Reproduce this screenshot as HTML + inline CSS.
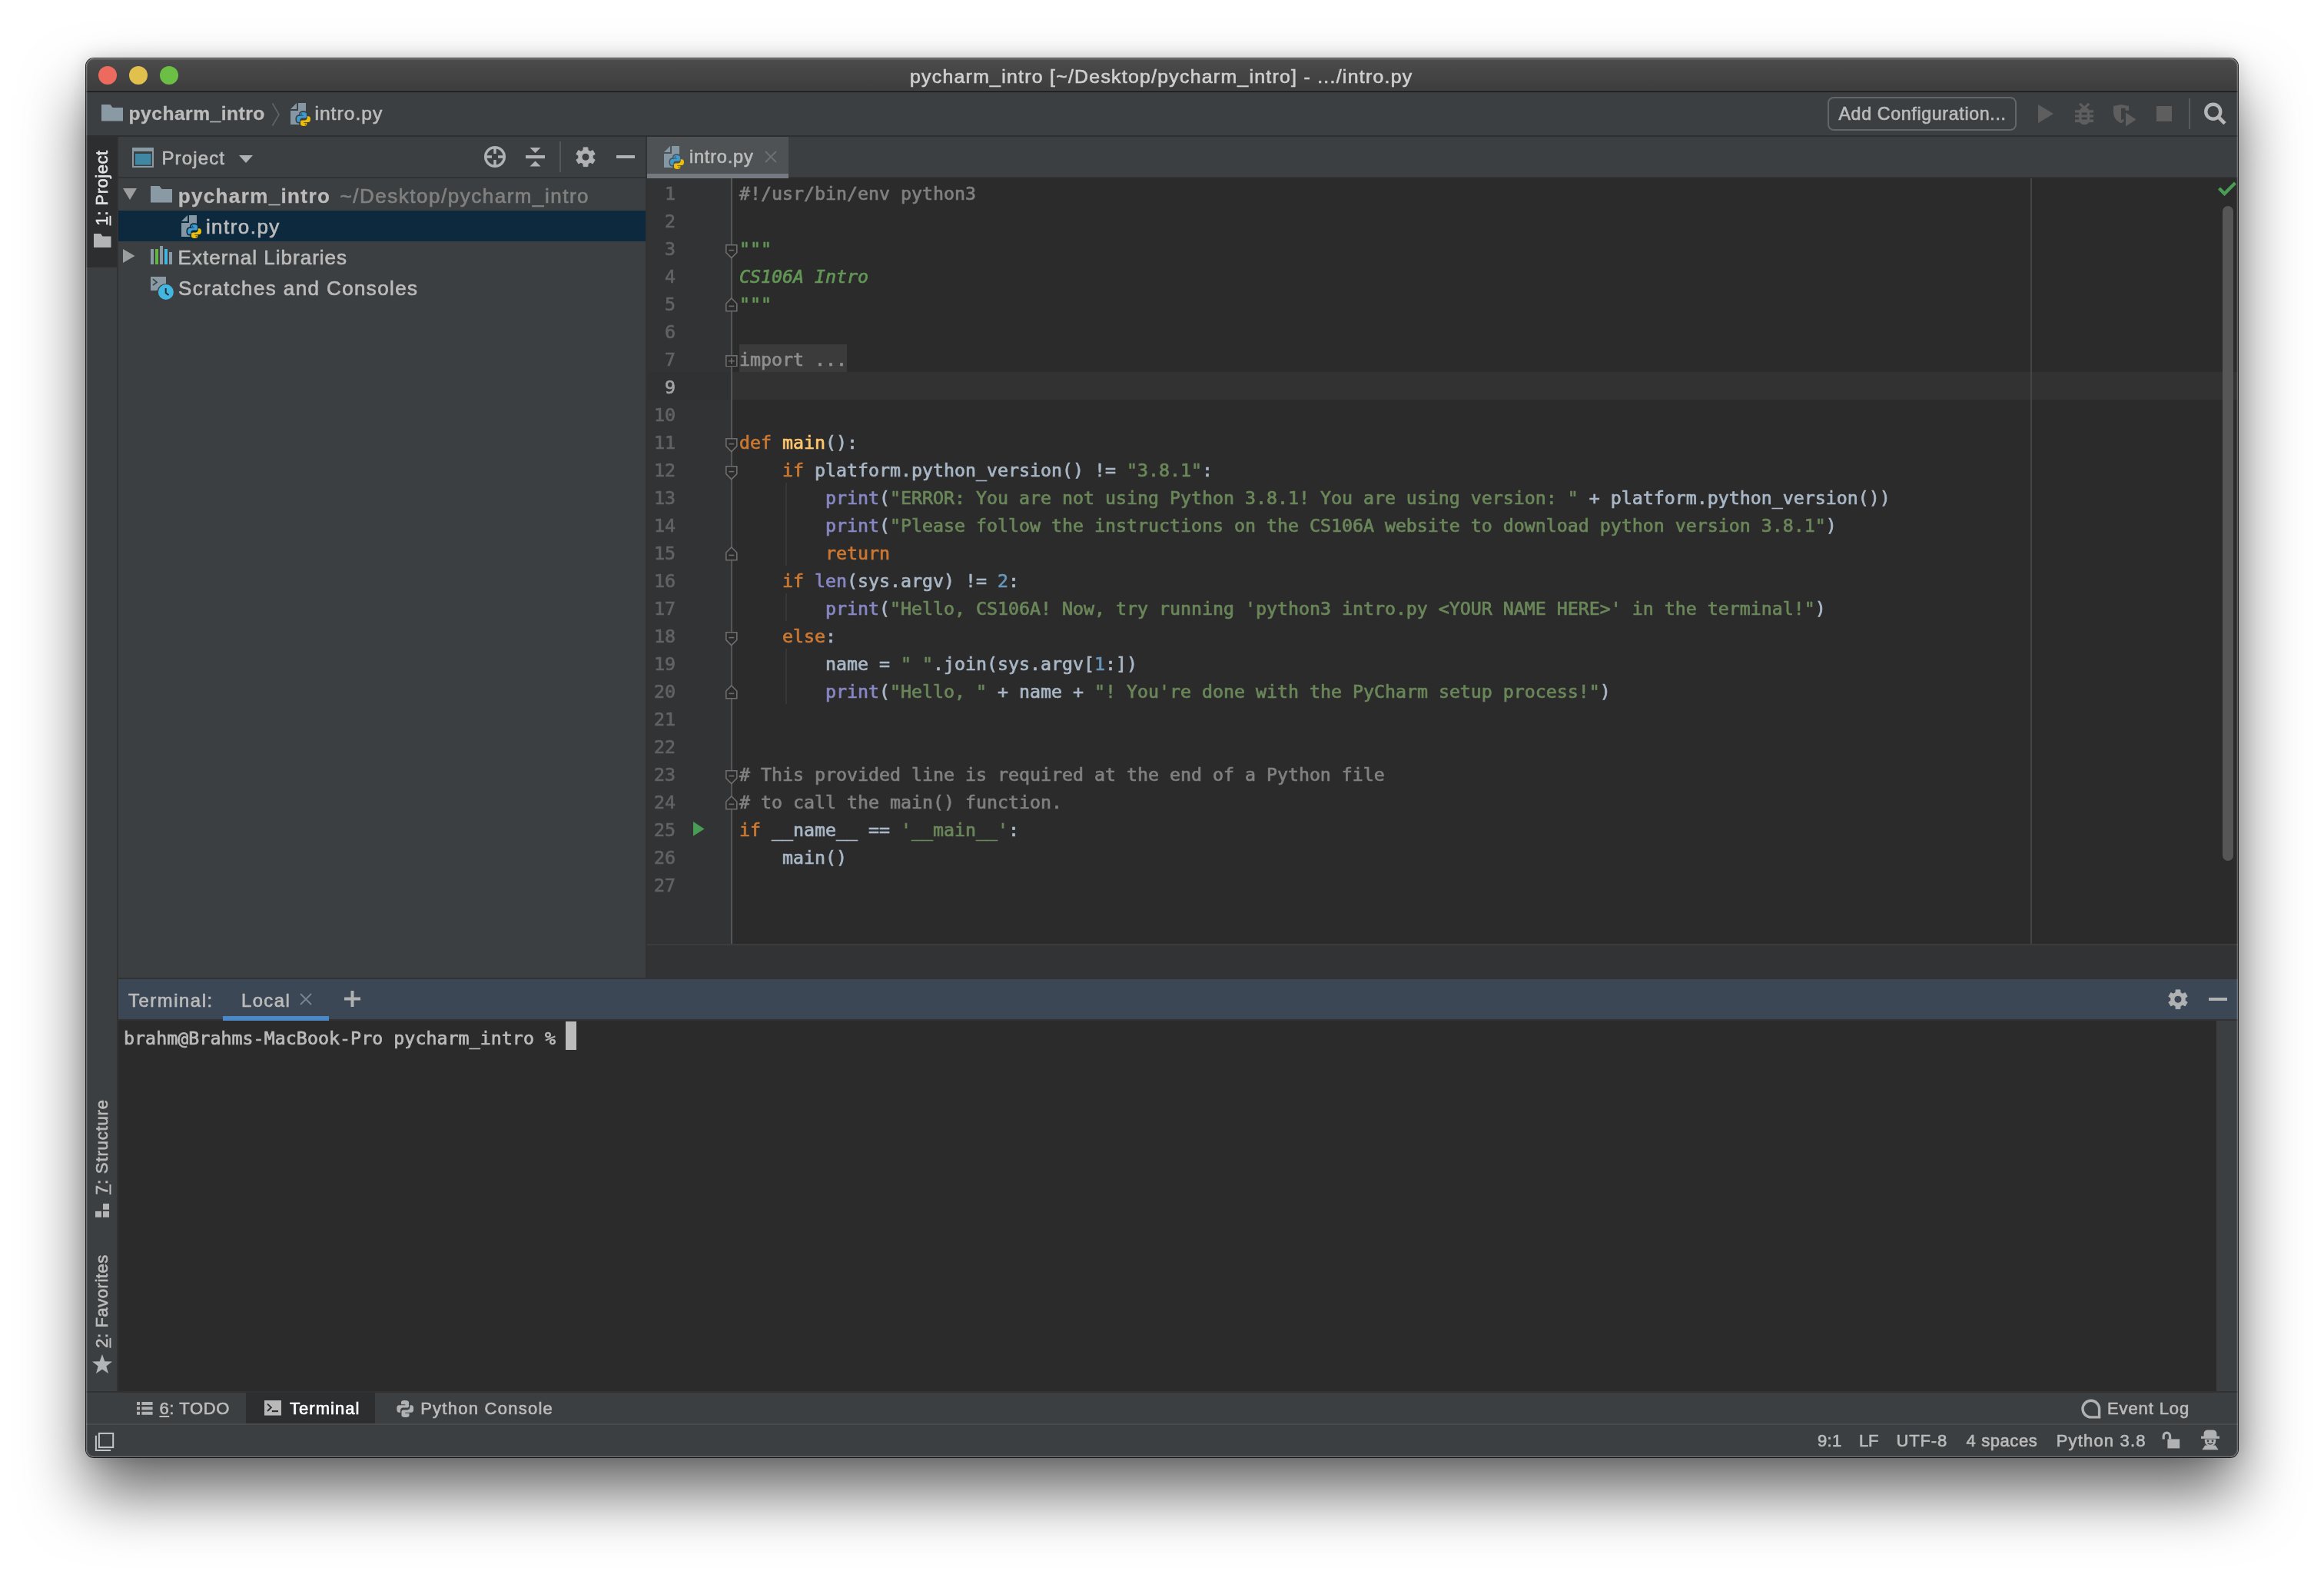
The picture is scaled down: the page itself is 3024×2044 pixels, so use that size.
<!DOCTYPE html>
<html><head><meta charset="utf-8"><title>pycharm_intro</title>
<style>
html,body{margin:0;padding:0;background:#fff;}
body{width:3024px;height:2044px;position:relative;overflow:hidden;font-family:'Liberation Sans', sans-serif;}
#shadow{position:absolute;left:112px;top:76px;width:2800px;height:1820px;border-radius:10px;box-shadow:0 46px 82px rgba(0,0,0,0.60), 0 0 24px rgba(0,0,0,0.16), 0 0 0 1px rgba(0,0,0,0.85);}
#win{position:absolute;left:0;top:0;width:3024px;height:2044px;clip-path:inset(76px 112px 148px 112px round 10px);background:#3c3f41;will-change:transform;}
#ring{position:absolute;left:112px;top:76px;width:2800px;height:1820px;box-sizing:border-box;border:1px solid rgba(255,255,255,0.27);border-radius:10px;box-shadow:inset 0 0 0 1px rgba(255,255,255,0.09);}
#win div,#win svg,#win span.t{position:absolute;}
span.t{white-space:pre;-webkit-text-stroke:0.65px currentColor;}

.code,.ln{-webkit-text-stroke:0.7px currentColor}
.code{font-family:"DejaVu Sans Mono","Liberation Mono",monospace;font-size:23.25px;letter-spacing:0px;white-space:pre;color:#a9b7c6;height:36px;line-height:36px;}
.k{color:#cc7832}.s{color:#6a8759}.d{color:#629755;font-style:italic}.c{color:#808080}.n{color:#6897bb}.f{color:#ffc66d}.b{color:#8888c6}
.ln{font-family:"DejaVu Sans Mono","Liberation Mono",monospace;font-size:23.25px;color:#606366;height:36px;line-height:36px;text-align:right;width:60px;white-space:pre;}

</style></head><body>
<div id="shadow"></div>
<div id="win">
<div style="left:112px;top:76px;width:2800px;height:44px;background:linear-gradient(#4c4c4c,#3c3c3c);"></div>
<div style="left:112px;top:76px;width:2800px;height:1px;background:#6b6b6b;"></div>
<div style="left:112px;top:118.6px;width:2800px;height:1.5px;background:#0c0c0c;"></div>
<div style="left:128px;top:86px;width:24px;height:24px;background:#ed6a5e;border-radius:50%;"></div>
<div style="left:168px;top:86px;width:24px;height:24px;background:#e2c04d;border-radius:50%;"></div>
<div style="left:208px;top:86px;width:24px;height:24px;background:#6cbf45;border-radius:50%;"></div>
<div style="left:112px;top:120px;width:2800px;height:56px;background:#3c3f41;"></div>
<div style="left:112px;top:176px;width:2800px;height:2px;background:#2d2f30;"></div>
<div style="left:2377.6px;top:125.6px;width:246.6px;height:44.6px;background:transparent;border:2.2px solid #636567;border-radius:8px;box-sizing:border-box;"></div>
<div style="left:2805.9px;top:138px;width:20.2px;height:20px;background:#5e5e5e;"></div>
<div style="left:2848px;top:128px;width:2px;height:40px;background:#5a5a5a;"></div>
<div style="left:112px;top:178px;width:40px;height:1632px;background:#3c3f41;"></div>
<div style="left:152px;top:178px;width:2px;height:1632px;background:#323232;"></div>
<div style="left:112px;top:178px;width:40px;height:170px;background:#2c2e2f;"></div>
<div style="left:154px;top:178px;width:686px;height:1094px;background:#3c3f41;"></div>
<div style="left:154px;top:230px;width:686px;height:2px;background:#323232;"></div>
<div style="left:840px;top:178px;width:2px;height:1094px;background:#323232;"></div>
<div style="left:727.8px;top:184px;width:2px;height:40px;background:#55585a;"></div>
<div style="left:802px;top:202px;width:24.3px;height:4.2px;background:#afb1b3;"></div>
<div style="left:154px;top:274px;width:686px;height:40px;background:#0d293e;"></div>
<div style="left:842px;top:178px;width:2070px;height:54px;background:#3c3f41;"></div>
<div style="left:842px;top:230px;width:2070px;height:2px;background:#323232;"></div>
<div style="left:842px;top:178px;width:184px;height:54px;background:#4e5254;"></div>
<div style="left:842px;top:226px;width:184px;height:6px;background:#747a80;"></div>
<div style="left:842px;top:232px;width:110px;height:996px;background:#313335;"></div>
<div style="left:953px;top:232px;width:1959px;height:996px;background:#2b2b2b;"></div>
<div style="left:951px;top:232px;width:2px;height:996px;background:#555555;"></div>
<div style="left:842px;top:484px;width:110px;height:36px;background:#2f3133;"></div>
<div style="left:953px;top:484px;width:1959px;height:36px;background:#323232;"></div>
<div style="left:951px;top:484px;width:2px;height:36px;background:#555555;"></div>
<div style="left:962px;top:448px;width:140px;height:36px;background:#3b3b3b;"></div>
<div style="left:2642px;top:232px;width:2px;height:996px;background:#454545;"></div>
<div style="left:2892px;top:268px;width:14px;height:852px;background:#565656;border-radius:7px;"></div>
<div style="left:842px;top:1228px;width:2070px;height:2px;background:#3a3c3e;"></div>
<div style="left:842px;top:1230px;width:2070px;height:42px;background:#313335;"></div>
<div style="left:154px;top:1272px;width:2758px;height:2px;background:#323232;"></div>
<div style="left:1022px;top:628px;width:2px;height:108px;background:#373737;"></div>
<div style="left:1022px;top:772px;width:2px;height:36px;background:#373737;"></div>
<div style="left:1022px;top:844px;width:2px;height:72px;background:#373737;"></div>
<div style="left:154px;top:1274px;width:2758px;height:52px;background:#3c4755;"></div>
<div style="left:154px;top:1326px;width:2758px;height:2px;background:#323232;"></div>
<div style="left:154px;top:1328px;width:2758px;height:482px;background:#2b2b2b;"></div>
<div style="left:2884px;top:1328px;width:28px;height:482px;background:#3c3f41;"></div>
<div style="left:290px;top:1322px;width:138px;height:6px;background:#4a88c7;"></div>
<div style="left:2874px;top:1297.5px;width:24.3px;height:4.2px;background:#afb1b3;"></div>
<div style="left:736px;top:1329px;width:14px;height:37px;background:#bbbbbb;"></div>
<div style="left:112px;top:1810px;width:2800px;height:2px;background:#323232;"></div>
<div style="left:112px;top:1812px;width:2800px;height:40px;background:#3c3f41;"></div>
<div style="left:112px;top:1852px;width:2800px;height:2px;background:#4a4a4a;"></div>
<div style="left:112px;top:1854px;width:2800px;height:42px;background:#3c3f41;"></div>
<div style="left:320px;top:1812px;width:168px;height:40px;background:#2c2e2f;"></div>
<svg style="left:132px;top:136.4px;" width="28" height="21.5" viewBox="0 0 28 21.5"><path d="M0 0H11.5L14.5 4H28V21.5H0Z" fill="#8a9aa5"/></svg>
<svg style="left:353px;top:133px;" width="12" height="32" viewBox="0 0 12 32"><path d="M1.5 1.5L10 16L1.5 30.5" fill="none" stroke="#5f6569" stroke-width="1.6"/></svg>
<svg style="left:378px;top:134px;" width="28" height="32" viewBox="0 0 28 32"><path d="M0 8H8V0Z" fill="#8497a2"/><path d="M10 0H20V28H0V10H10Z" fill="#8497a2"/><g transform="translate(8,12) scale(0.9,0.928)"><path d="M9.3 0C6 0 5.2 1.2 5.2 2.6V4.6H9.7V5.4H3C1.2 5.4 0 6.9 0 9.6C0 12.3 1.2 13.8 3 13.8H4.8V11.2C4.8 9.5 6.2 8.2 7.9 8.2H12.2C13.5 8.2 14.4 7.2 14.4 5.9V2.6C14.4 1.2 13 0 9.3 0Z" fill="#3c3f41" stroke="#3c3f41" stroke-width="3.6"/><path d="M10.7 19.4C14 19.4 14.8 18.2 14.8 16.8V14.8H10.3V14H17C18.8 14 20 12.5 20 9.8C20 7.1 18.8 5.6 17 5.6H15.2V8.2C15.2 9.9 13.8 11.2 12.1 11.2H7.8C6.5 11.2 5.6 12.2 5.6 13.5V16.8C5.6 18.2 7 19.4 10.7 19.4Z" fill="#3c3f41" stroke="#3c3f41" stroke-width="3.6"/><path d="M9.3 0C6 0 5.2 1.2 5.2 2.6V4.6H9.7V5.4H3C1.2 5.4 0 6.9 0 9.6C0 12.3 1.2 13.8 3 13.8H4.8V11.2C4.8 9.5 6.2 8.2 7.9 8.2H12.2C13.5 8.2 14.4 7.2 14.4 5.9V2.6C14.4 1.2 13 0 9.3 0Z" fill="#3e9bd0"/><path d="M10.7 19.4C14 19.4 14.8 18.2 14.8 16.8V14.8H10.3V14H17C18.8 14 20 12.5 20 9.8C20 7.1 18.8 5.6 17 5.6H15.2V8.2C15.2 9.9 13.8 11.2 12.1 11.2H7.8C6.5 11.2 5.6 12.2 5.6 13.5V16.8C5.6 18.2 7 19.4 10.7 19.4Z" fill="#efbe07"/><circle cx="7.2" cy="2.5" r="1" fill="#1f4f6b"/><circle cx="12.8" cy="16.9" r="1" fill="#6b5500"/></g></svg>
<svg style="left:2651.6px;top:135.9px;" width="20" height="24.2" viewBox="0 0 20 24.2"><path d="M0 0L20 12.1L0 24.2Z" fill="#5e5e5e"/></svg>
<svg style="left:2699.8px;top:133.6px;" width="24.4" height="28.6" viewBox="0 0 24.4 28.6"><g fill="#5e5e5e"><path d="M5.2 12.5A7 7 0 0 1 19.2 12.5V21.4A7 7 0 0 1 5.2 21.4Z"/><rect x="0" y="9.3" width="24.4" height="3.2"/><rect x="0" y="15.4" width="24.4" height="3.2"/><rect x="0" y="21.5" width="24.4" height="3.6"/></g><path d="M6 0.8L12.2 6.4L18.4 0.8" fill="none" stroke="#5e5e5e" stroke-width="3.2"/><rect x="8.7" y="12.5" width="7" height="2.9" fill="#3c3f41"/><rect x="8.7" y="18.6" width="7" height="2.9" fill="#3c3f41"/></svg>
<svg style="left:2750px;top:135.5px;" width="30" height="29" viewBox="0 0 30 29"><g fill="#5e5e5e"><path d="M0 2L10 0V24.3C4 21.5 0 17 0 10Z"/><path d="M10 0L20 2V7.8H15.6V4.8H10Z"/><path d="M10 20.5L13.4 18.6V22.3L10 24.3Z"/><path d="M16 10.6L29.6 19.6L16 28.4Z"/></g></svg>
<svg style="left:2866px;top:132px;" width="32" height="32" viewBox="0 0 32 32"><circle cx="13.75" cy="13.25" r="9.5" fill="none" stroke="#b4b6b8" stroke-width="4.4"/><path d="M20.6 20.2L29 28.6" stroke="#b4b6b8" stroke-width="4.8"/></svg>
<svg style="left:122px;top:303.5px;" width="22.5" height="18.5" viewBox="0 0 22.5 18.5"><path d="M0 0H9L11.5 3.5H22.5V18.5H0Z" fill="#b2b4b6"/></svg>
<svg style="left:124px;top:1566.2px;" width="18" height="18" viewBox="0 0 18 18"><g fill="#b4b5b7"><rect x="10" y="0" width="8" height="7.8"/><rect x="0" y="9.9" width="8" height="7.9"/><rect x="10" y="9.9" width="8" height="7.9"/></g></svg>
<svg style="left:120px;top:1762px;" width="26" height="26" viewBox="0 0 26 26"><path d="M13 0L16.3 9.3L26 9.5L18.3 15.5L21 25L13 19.4L5 25L7.7 15.5L0 9.5L9.7 9.3Z" fill="#b2b4b6"/></svg>
<svg style="left:172px;top:192px;" width="28" height="26" viewBox="0 0 28 26"><rect x="0" y="0" width="28" height="26" fill="#8a9aa5"/><rect x="2" y="5" width="24" height="19" fill="#3c3f41"/><rect x="4" y="8" width="20.5" height="14.5" fill="#3f87a2"/></svg>
<svg style="left:311px;top:201.8px;" width="18" height="10" viewBox="0 0 18 10"><path d="M0 0H18L9 10Z" fill="#afb1b3"/></svg>
<svg style="left:629px;top:189px;" width="30" height="30" viewBox="0 0 30 30"><g fill="none" stroke="#afb1b3" stroke-width="3.4"><circle cx="15" cy="15" r="12.3"/><path d="M15 2V11M15 19V28M2 15H11M19 15H28"/></g></svg>
<svg style="left:683.5px;top:192px;" width="25" height="25" viewBox="0 0 25 25"><g fill="#afb1b3"><path d="M5.5 0H19.5L12.5 7Z"/><rect x="0" y="10" width="25" height="4.2"/><path d="M5.5 24.4H19.5L12.5 17.4Z"/></g></svg>
<svg style="left:749px;top:190.5px;" width="26" height="27" viewBox="0 0 26 27"><path fill="#afb1b3" fill-rule="evenodd" stroke="#afb1b3" stroke-width="1" stroke-linejoin="round" d="M16.03 4.46L15.86 0.88L10.14 0.88L9.97 4.46L6.90 6.23L3.71 4.59L0.85 9.54L3.87 11.48L3.87 15.02L0.85 16.96L3.71 21.91L6.90 20.27L9.97 22.04L10.14 25.62L15.86 25.62L16.03 22.04L19.10 20.27L22.29 21.91L25.15 16.96L22.13 15.02L22.13 11.48L25.15 9.54L22.29 4.59L19.10 6.23ZM8.00 13.25a5.0 5.0 0 1 0 10.0 0a5.0 5.0 0 1 0 -10.0 0Z"/></svg>
<svg style="left:160px;top:244.5px;" width="18" height="15" viewBox="0 0 18 15"><path d="M0 0H18L9 15Z" fill="#9b9d9f"/></svg>
<svg style="left:196px;top:242.3px;" width="28" height="21.7" viewBox="0 0 28 21.5"><path d="M0 0H11.5L14.5 4H28V21.5H0Z" fill="#8a9aa5"/></svg>
<svg style="left:236px;top:280px;" width="28" height="32" viewBox="0 0 28 32"><path d="M0 8H8V0Z" fill="#8497a2"/><path d="M10 0H20V28H0V10H10Z" fill="#8497a2"/><g transform="translate(8,12) scale(0.9,0.928)"><path d="M9.3 0C6 0 5.2 1.2 5.2 2.6V4.6H9.7V5.4H3C1.2 5.4 0 6.9 0 9.6C0 12.3 1.2 13.8 3 13.8H4.8V11.2C4.8 9.5 6.2 8.2 7.9 8.2H12.2C13.5 8.2 14.4 7.2 14.4 5.9V2.6C14.4 1.2 13 0 9.3 0Z" fill="#0d293e" stroke="#0d293e" stroke-width="3.6"/><path d="M10.7 19.4C14 19.4 14.8 18.2 14.8 16.8V14.8H10.3V14H17C18.8 14 20 12.5 20 9.8C20 7.1 18.8 5.6 17 5.6H15.2V8.2C15.2 9.9 13.8 11.2 12.1 11.2H7.8C6.5 11.2 5.6 12.2 5.6 13.5V16.8C5.6 18.2 7 19.4 10.7 19.4Z" fill="#0d293e" stroke="#0d293e" stroke-width="3.6"/><path d="M9.3 0C6 0 5.2 1.2 5.2 2.6V4.6H9.7V5.4H3C1.2 5.4 0 6.9 0 9.6C0 12.3 1.2 13.8 3 13.8H4.8V11.2C4.8 9.5 6.2 8.2 7.9 8.2H12.2C13.5 8.2 14.4 7.2 14.4 5.9V2.6C14.4 1.2 13 0 9.3 0Z" fill="#3e9bd0"/><path d="M10.7 19.4C14 19.4 14.8 18.2 14.8 16.8V14.8H10.3V14H17C18.8 14 20 12.5 20 9.8C20 7.1 18.8 5.6 17 5.6H15.2V8.2C15.2 9.9 13.8 11.2 12.1 11.2H7.8C6.5 11.2 5.6 12.2 5.6 13.5V16.8C5.6 18.2 7 19.4 10.7 19.4Z" fill="#efbe07"/><circle cx="7.2" cy="2.5" r="1" fill="#1f4f6b"/><circle cx="12.8" cy="16.9" r="1" fill="#6b5500"/></g></svg>
<svg style="left:160px;top:324.4px;" width="15.5" height="18" viewBox="0 0 15.5 18"><path d="M0 0L15.5 9L0 18Z" fill="#9b9d9f"/></svg>
<svg style="left:196px;top:320px;" width="28" height="24" viewBox="0 0 28 24"><g><rect x="0" y="4" width="4" height="20" fill="#8a9aa5"/><rect x="6" y="4" width="4" height="20" fill="#62b543"/><rect x="12" y="0" width="4" height="24" fill="#8a9aa5"/><rect x="18" y="4" width="4" height="20" fill="#40b6e0"/><rect x="24" y="8" width="4" height="16" fill="#8a9aa5"/></g></svg>
<svg style="left:196px;top:360px;" width="32" height="32" viewBox="0 0 32 32"><path d="M0 0H20V9.2A11.6 11.6 0 0 0 8.5 18H0Z" fill="#8a9aa5"/><path d="M3 3.2L8 7.2L3 11.2" fill="none" stroke="#3c3f41" stroke-width="1.7"/><circle cx="19.9" cy="20" r="10" fill="#40b6e0"/><path d="M19.7 15V21L23.5 24" fill="none" stroke="#2b2b2b" stroke-width="2"/></svg>
<svg style="left:864px;top:190px;" width="28" height="32" viewBox="0 0 28 32"><path d="M0 8H8V0Z" fill="#8497a2"/><path d="M10 0H20V28H0V10H10Z" fill="#8497a2"/><g transform="translate(8,12) scale(0.9,0.928)"><path d="M9.3 0C6 0 5.2 1.2 5.2 2.6V4.6H9.7V5.4H3C1.2 5.4 0 6.9 0 9.6C0 12.3 1.2 13.8 3 13.8H4.8V11.2C4.8 9.5 6.2 8.2 7.9 8.2H12.2C13.5 8.2 14.4 7.2 14.4 5.9V2.6C14.4 1.2 13 0 9.3 0Z" fill="#4e5254" stroke="#4e5254" stroke-width="3.6"/><path d="M10.7 19.4C14 19.4 14.8 18.2 14.8 16.8V14.8H10.3V14H17C18.8 14 20 12.5 20 9.8C20 7.1 18.8 5.6 17 5.6H15.2V8.2C15.2 9.9 13.8 11.2 12.1 11.2H7.8C6.5 11.2 5.6 12.2 5.6 13.5V16.8C5.6 18.2 7 19.4 10.7 19.4Z" fill="#4e5254" stroke="#4e5254" stroke-width="3.6"/><path d="M9.3 0C6 0 5.2 1.2 5.2 2.6V4.6H9.7V5.4H3C1.2 5.4 0 6.9 0 9.6C0 12.3 1.2 13.8 3 13.8H4.8V11.2C4.8 9.5 6.2 8.2 7.9 8.2H12.2C13.5 8.2 14.4 7.2 14.4 5.9V2.6C14.4 1.2 13 0 9.3 0Z" fill="#3e9bd0"/><path d="M10.7 19.4C14 19.4 14.8 18.2 14.8 16.8V14.8H10.3V14H17C18.8 14 20 12.5 20 9.8C20 7.1 18.8 5.6 17 5.6H15.2V8.2C15.2 9.9 13.8 11.2 12.1 11.2H7.8C6.5 11.2 5.6 12.2 5.6 13.5V16.8C5.6 18.2 7 19.4 10.7 19.4Z" fill="#efbe07"/><circle cx="7.2" cy="2.5" r="1" fill="#1f4f6b"/><circle cx="12.8" cy="16.9" r="1" fill="#6b5500"/></g></svg>
<svg style="left:995px;top:195.5px;" width="16" height="16" viewBox="0 0 16 16"><path d="M1 1L15 15M15 1L1 15" stroke="#6e7173" stroke-width="1.8"/></svg>
<svg style="left:2886px;top:235px;" width="24" height="20" viewBox="0 0 24 20"><path d="M1.5 10L8.5 17L22.5 3" fill="none" stroke="#499c54" stroke-width="4.4"/></svg>
<svg style="left:944.2px;top:318.2px;" width="15.6" height="18.6" viewBox="0 0 15.6 18.6"><path d="M0.8 0.8H14.8V10.6L7.8 17.6L0.8 10.6Z" fill="#2b2b2b" stroke="#6e6e6e" stroke-width="1.6"/><path d="M4.4 7.6H11.2" stroke="#6e6e6e" stroke-width="1.6"/></svg>
<svg style="left:944.2px;top:387.2px;" width="15.6" height="18.6" viewBox="0 0 15.6 18.6"><path d="M0.8 17.8H14.8V8L7.8 1L0.8 8Z" fill="#2b2b2b" stroke="#6e6e6e" stroke-width="1.6"/><path d="M4.4 11.4H11.2" stroke="#6e6e6e" stroke-width="1.6"/></svg>
<svg style="left:944.2px;top:461.8px;" width="15.6" height="15.6" viewBox="0 0 15.6 15.6"><rect x="0.8" y="0.8" width="14" height="14" fill="#2b2b2b" stroke="#6e6e6e" stroke-width="1.6"/><path d="M3.8 7.8H11.8M7.8 3.8V11.8" stroke="#6e6e6e" stroke-width="1.6"/></svg>
<svg style="left:944.2px;top:570.2px;" width="15.6" height="18.6" viewBox="0 0 15.6 18.6"><path d="M0.8 0.8H14.8V10.6L7.8 17.6L0.8 10.6Z" fill="#2b2b2b" stroke="#6e6e6e" stroke-width="1.6"/><path d="M4.4 7.6H11.2" stroke="#6e6e6e" stroke-width="1.6"/></svg>
<svg style="left:944.2px;top:606.2px;" width="15.6" height="18.6" viewBox="0 0 15.6 18.6"><path d="M0.8 0.8H14.8V10.6L7.8 17.6L0.8 10.6Z" fill="#2b2b2b" stroke="#6e6e6e" stroke-width="1.6"/><path d="M4.4 7.6H11.2" stroke="#6e6e6e" stroke-width="1.6"/></svg>
<svg style="left:944.2px;top:711.2px;" width="15.6" height="18.6" viewBox="0 0 15.6 18.6"><path d="M0.8 17.8H14.8V8L7.8 1L0.8 8Z" fill="#2b2b2b" stroke="#6e6e6e" stroke-width="1.6"/><path d="M4.4 11.4H11.2" stroke="#6e6e6e" stroke-width="1.6"/></svg>
<svg style="left:944.2px;top:822.2px;" width="15.6" height="18.6" viewBox="0 0 15.6 18.6"><path d="M0.8 0.8H14.8V10.6L7.8 17.6L0.8 10.6Z" fill="#2b2b2b" stroke="#6e6e6e" stroke-width="1.6"/><path d="M4.4 7.6H11.2" stroke="#6e6e6e" stroke-width="1.6"/></svg>
<svg style="left:944.2px;top:891.2px;" width="15.6" height="18.6" viewBox="0 0 15.6 18.6"><path d="M0.8 17.8H14.8V8L7.8 1L0.8 8Z" fill="#2b2b2b" stroke="#6e6e6e" stroke-width="1.6"/><path d="M4.4 11.4H11.2" stroke="#6e6e6e" stroke-width="1.6"/></svg>
<svg style="left:944.2px;top:1002.2px;" width="15.6" height="18.6" viewBox="0 0 15.6 18.6"><path d="M0.8 0.8H14.8V10.6L7.8 17.6L0.8 10.6Z" fill="#2b2b2b" stroke="#6e6e6e" stroke-width="1.6"/><path d="M4.4 7.6H11.2" stroke="#6e6e6e" stroke-width="1.6"/></svg>
<svg style="left:944.2px;top:1035.2px;" width="15.6" height="18.6" viewBox="0 0 15.6 18.6"><path d="M0.8 17.8H14.8V8L7.8 1L0.8 8Z" fill="#2b2b2b" stroke="#6e6e6e" stroke-width="1.6"/><path d="M4.4 11.4H11.2" stroke="#6e6e6e" stroke-width="1.6"/></svg>
<svg style="left:901.8px;top:1069px;" width="15" height="19" viewBox="0 0 15 19"><path d="M0 0L14.6 9.4L0 18.8Z" fill="#499c54"/></svg>
<svg style="left:390px;top:1292px;" width="16" height="16" viewBox="0 0 16 16"><path d="M1 1L15 15M15 1L1 15" stroke="#7b8591" stroke-width="1.8"/></svg>
<svg style="left:447.5px;top:1289px;" width="21" height="21" viewBox="0 0 21 21"><path d="M10.5 0V21M0 10.5H21" stroke="#afb1b3" stroke-width="4"/></svg>
<svg style="left:2821px;top:1286.5px;" width="26" height="27" viewBox="0 0 26 27"><path fill="#afb1b3" fill-rule="evenodd" stroke="#afb1b3" stroke-width="1" stroke-linejoin="round" d="M16.03 4.46L15.86 0.88L10.14 0.88L9.97 4.46L6.90 6.23L3.71 4.59L0.85 9.54L3.87 11.48L3.87 15.02L0.85 16.96L3.71 21.91L6.90 20.27L9.97 22.04L10.14 25.62L15.86 25.62L16.03 22.04L19.10 20.27L22.29 21.91L25.15 16.96L22.13 15.02L22.13 11.48L25.15 9.54L22.29 4.59L19.10 6.23ZM8.00 13.25a5.0 5.0 0 1 0 10.0 0a5.0 5.0 0 1 0 -10.0 0Z"/></svg>
<svg style="left:177.8px;top:1823.7px;" width="21" height="17" viewBox="0 0 21 17"><g fill="#afb1b3"><rect x="0" y="0" width="4" height="4"/><rect x="6.4" y="0" width="14.2" height="4"/><rect x="0" y="6.4" width="4" height="4"/><rect x="6.4" y="6.4" width="14.2" height="4"/><rect x="0" y="12.8" width="4" height="4"/><rect x="6.4" y="12.8" width="14.2" height="4"/></g></svg>
<svg style="left:344px;top:1822.3px;" width="22" height="19.6" viewBox="0 0 22 19.6"><rect width="22" height="19.6" fill="#b9b9b9"/><path d="M4 4.6L8.8 9.3L4 14" fill="none" stroke="#2c2e2f" stroke-width="2"/><rect x="9.8" y="13" width="8.2" height="2.2" fill="#2c2e2f"/></svg>
<svg style="left:515.8px;top:1821.8px;" width="22.5" height="22" viewBox="0 0 23 23"><g fill="#afb1b3"><path d="M11 0C6.5 0 6 1.5 6 3V5.5H11.5V6.5H3C1 6.5 0 8.5 0 11.5C0 14.5 1 16.5 3 16.5H5V13.5C5 11.5 6.5 10 8.5 10H14C15.5 10 16.5 9 16.5 7.5V3C16.5 1.5 15.5 0 11 0Z"/><path d="M12 23C16.5 23 17 21.5 17 20V17.5H11.5V16.5H20C22 16.5 23 14.5 23 11.5C23 8.5 22 6.5 20 6.5H18V9.5C18 11.5 16.5 13 14.5 13H9C7.5 13 6.5 14 6.5 15.5V20C6.5 21.5 7.5 23 12 23Z"/></g></svg>
<svg style="left:2706px;top:1819px;" width="30" height="30" viewBox="0 0 30 30"><path d="M14.8 3.3A10.8 10.8 0 1 0 14.8 24.9H25.6V14.1A10.8 10.8 0 0 0 14.8 3.3Z" fill="none" stroke="#afb1b3" stroke-width="3.4"/></svg>
<svg style="left:123px;top:1863px;" width="26" height="26" viewBox="0 0 26 26"><g fill="none" stroke="#c3c5c7" stroke-width="2"><rect x="5.9" y="1.9" width="18.3" height="18.2"/><path d="M1.9 4.8V24.1H21.1"/></g></svg>
<svg style="left:2813px;top:1862px;" width="24" height="24" viewBox="0 0 24 24"><g fill="#afb1b3"><rect x="7.4" y="10.4" width="15.8" height="12"/><path d="M0.6 10.4V6.4A5.8 5.8 0 0 1 12.2 6.4V10.4H9V6.4A2.6 2.6 0 0 0 3.8 6.4V10.4Z"/></g></svg>
<svg style="left:2863.6px;top:1860px;" width="24" height="27" viewBox="0 0 24 27"><g fill="#afb1b3"><path d="M3.6 9V5.4A5 5 0 0 1 8.6 0.4H15.4A5 5 0 0 1 20.4 5.4V9Z"/><rect x="0" y="8.6" width="24" height="3.2"/><path d="M4.8 12.4H19.2V15A7.2 6.6 0 0 1 4.8 15Z"/><path d="M1.4 26.2L5.2 20.4H18.8L22.6 26.2Z"/></g><circle cx="9" cy="14.8" r="1.4" fill="#3c3f41"/><circle cx="15" cy="14.8" r="1.4" fill="#3c3f41"/><path d="M8.6 17.4Q12 20.4 15.4 17.4" fill="none" stroke="#3c3f41" stroke-width="1.4"/></svg>
<span class="t" style="left:1184.00px;top:83.91px;font-size:24.8px;line-height:32px;color:#cfcfcf;letter-spacing:1.286px;">pycharm_intro [~/Desktop/pycharm_intro] - .../intro.py</span>
<span class="t" style="left:167.60px;top:131.88px;font-size:24.6px;line-height:32px;color:#bbbbbb;letter-spacing:0.482px;font-weight:bold;-webkit-text-stroke:0.35px currentColor;">pycharm_intro</span>
<span class="t" style="left:409.40px;top:131.88px;font-size:24.6px;line-height:32px;color:#bbbbbb;letter-spacing:1.035px;">intro.py</span>
<span class="t" style="left:2392.50px;top:133.26px;font-size:23.2px;line-height:30px;color:#bbbbbb;letter-spacing:0.657px;">Add Configuration...</span>
<span class="t" style="left:0.00px;top:-22.12px;font-size:22px;line-height:29px;color:#e4e4e4;letter-spacing:0.520px;transform-origin:0 0;transform:translate(118.48px,293.50px) rotate(-90deg);left:0;top:0;-webkit-text-stroke:0.6px currentColor;"><u style="text-underline-offset:2px;text-decoration-thickness:1.8px">1</u>: Project</span>
<span class="t" style="left:0.00px;top:-22.12px;font-size:22px;line-height:29px;color:#bbbbbb;letter-spacing:0.865px;transform-origin:0 0;transform:translate(118.48px,1554.20px) rotate(-90deg);left:0;top:0;"><u style="text-underline-offset:2px;text-decoration-thickness:1.8px">7</u>: Structure</span>
<span class="t" style="left:0.00px;top:-22.12px;font-size:22px;line-height:29px;color:#bbbbbb;letter-spacing:0.552px;transform-origin:0 0;transform:translate(118.48px,1753.70px) rotate(-90deg);left:0;top:0;"><u style="text-underline-offset:2px;text-decoration-thickness:1.8px">2</u>: Favorites</span>
<span class="t" style="left:210.40px;top:190.48px;font-size:24px;line-height:31px;color:#bbbbbb;letter-spacing:1.145px;">Project</span>
<span class="t" style="left:231.70px;top:237.99px;font-size:26px;line-height:34px;color:#bbbbbb;letter-spacing:1.373px;font-weight:bold;-webkit-text-stroke:0.35px currentColor;">pycharm_intro</span>
<span class="t" style="left:442.60px;top:237.99px;font-size:26px;line-height:34px;color:#808080;letter-spacing:1.510px;">~/Desktop/pycharm_intro</span>
<span class="t" style="left:267.90px;top:277.99px;font-size:26px;line-height:34px;color:#bbbbbb;letter-spacing:1.448px;">intro.py</span>
<span class="t" style="left:231.60px;top:317.99px;font-size:26px;line-height:34px;color:#bbbbbb;letter-spacing:1.011px;">External Libraries</span>
<span class="t" style="left:232.10px;top:357.99px;font-size:26px;line-height:34px;color:#bbbbbb;letter-spacing:1.389px;">Scratches and Consoles</span>
<span class="t" style="left:896.90px;top:189.32px;font-size:23.6px;line-height:31px;color:#bbbbbb;letter-spacing:0.789px;">intro.py</span>
<span class="t" style="left:167.00px;top:1286.25px;font-size:23.8px;line-height:31px;color:#bbbbbb;letter-spacing:1.572px;">Terminal:</span>
<span class="t" style="left:314.00px;top:1286.25px;font-size:23.8px;line-height:31px;color:#bbbbbb;letter-spacing:1.449px;">Local</span>
<span class="t" style="left:161.00px;top:1336.46px;font-size:23.25px;line-height:30px;color:#bbbbbb;letter-spacing:0.054px;font-family:'DejaVu Sans Mono', 'Liberation Mono', monospace;-webkit-text-stroke:0.7px currentColor;">brahm@Brahms-MacBook-Pro pycharm_intro %</span>
<span class="t" style="left:207.40px;top:1818.18px;font-size:22px;line-height:29px;color:#bbbbbb;letter-spacing:0.617px;"><u style="text-underline-offset:2px;text-decoration-thickness:1.8px">6</u>: TODO</span>
<span class="t" style="left:377.00px;top:1818.18px;font-size:22px;line-height:29px;color:#ffffff;letter-spacing:1.051px;">Terminal</span>
<span class="t" style="left:547.20px;top:1818.18px;font-size:22px;line-height:29px;color:#bbbbbb;letter-spacing:1.255px;">Python Console</span>
<span class="t" style="left:2742.00px;top:1818.18px;font-size:22px;line-height:29px;color:#bbbbbb;letter-spacing:0.895px;">Event Log</span>
<span class="t" style="left:2365.00px;top:1860.38px;font-size:22px;line-height:29px;color:#bbbbbb;letter-spacing:0.326px;">9:1</span>
<span class="t" style="left:2419.00px;top:1860.38px;font-size:22px;line-height:29px;color:#bbbbbb;letter-spacing:-0.235px;">LF</span>
<span class="t" style="left:2467.40px;top:1860.38px;font-size:22px;line-height:29px;color:#bbbbbb;letter-spacing:0.877px;">UTF-8</span>
<span class="t" style="left:2558.60px;top:1860.38px;font-size:22px;line-height:29px;color:#bbbbbb;letter-spacing:0.592px;">4 spaces</span>
<span class="t" style="left:2675.70px;top:1860.38px;font-size:22px;line-height:29px;color:#bbbbbb;letter-spacing:1.183px;">Python 3.8</span>
<div class="ln" style="left:819px;top:234px;color:#606366">1</div><div class="code" style="left:962px;top:234px"><span class="c">#!/usr/bin/env python3</span></div><div class="ln" style="left:819px;top:270px;color:#606366">2</div><div class="ln" style="left:819px;top:306px;color:#606366">3</div><div class="code" style="left:962px;top:306px"><span class="d">"""</span></div><div class="ln" style="left:819px;top:342px;color:#606366">4</div><div class="code" style="left:962px;top:342px"><span class="d">CS106A Intro</span></div><div class="ln" style="left:819px;top:378px;color:#606366">5</div><div class="code" style="left:962px;top:378px"><span class="d">"""</span></div><div class="ln" style="left:819px;top:414px;color:#606366">6</div><div class="ln" style="left:819px;top:450px;color:#606366">7</div><div class="code" style="left:962px;top:450px"><span style="color:#8f8f8f">import ...</span></div><div class="ln" style="left:819px;top:486px;color:#a4a3a3">9</div><div class="ln" style="left:819px;top:522px;color:#606366">10</div><div class="ln" style="left:819px;top:558px;color:#606366">11</div><div class="code" style="left:962px;top:558px"><span class="k">def </span><span class="f">main</span>():</div><div class="ln" style="left:819px;top:594px;color:#606366">12</div><div class="code" style="left:962px;top:594px">    <span class="k">if </span>platform.python_version() != <span class="s">"3.8.1"</span>:</div><div class="ln" style="left:819px;top:630px;color:#606366">13</div><div class="code" style="left:962px;top:630px">        <span class="b">print</span>(<span class="s">"ERROR: You are not using Python 3.8.1! You are using version: "</span> + platform.python_version())</div><div class="ln" style="left:819px;top:666px;color:#606366">14</div><div class="code" style="left:962px;top:666px">        <span class="b">print</span>(<span class="s">"Please follow the instructions on the CS106A website to download python version 3.8.1"</span>)</div><div class="ln" style="left:819px;top:702px;color:#606366">15</div><div class="code" style="left:962px;top:702px">        <span class="k">return</span></div><div class="ln" style="left:819px;top:738px;color:#606366">16</div><div class="code" style="left:962px;top:738px">    <span class="k">if </span><span class="b">len</span>(sys.argv) != <span class="n">2</span>:</div><div class="ln" style="left:819px;top:774px;color:#606366">17</div><div class="code" style="left:962px;top:774px">        <span class="b">print</span>(<span class="s">"Hello, CS106A! Now, try running 'python3 intro.py &lt;YOUR NAME HERE&gt;' in the terminal!"</span>)</div><div class="ln" style="left:819px;top:810px;color:#606366">18</div><div class="code" style="left:962px;top:810px">    <span class="k">else</span>:</div><div class="ln" style="left:819px;top:846px;color:#606366">19</div><div class="code" style="left:962px;top:846px">        name = <span class="s">" "</span>.join(sys.argv[<span class="n">1</span>:])</div><div class="ln" style="left:819px;top:882px;color:#606366">20</div><div class="code" style="left:962px;top:882px">        <span class="b">print</span>(<span class="s">"Hello, "</span> + name + <span class="s">"! You're done with the PyCharm setup process!"</span>)</div><div class="ln" style="left:819px;top:918px;color:#606366">21</div><div class="ln" style="left:819px;top:954px;color:#606366">22</div><div class="ln" style="left:819px;top:990px;color:#606366">23</div><div class="code" style="left:962px;top:990px"><span class="c"># This provided line is required at the end of a Python file</span></div><div class="ln" style="left:819px;top:1026px;color:#606366">24</div><div class="code" style="left:962px;top:1026px"><span class="c"># to call the main() function.</span></div><div class="ln" style="left:819px;top:1062px;color:#606366">25</div><div class="code" style="left:962px;top:1062px"><span class="k">if </span>__name__ == <span class="s">'__main__'</span>:</div><div class="ln" style="left:819px;top:1098px;color:#606366">26</div><div class="code" style="left:962px;top:1098px">    main()</div><div class="ln" style="left:819px;top:1134px;color:#606366">27</div>
</div>
<div id="ring"></div>
</body></html>
